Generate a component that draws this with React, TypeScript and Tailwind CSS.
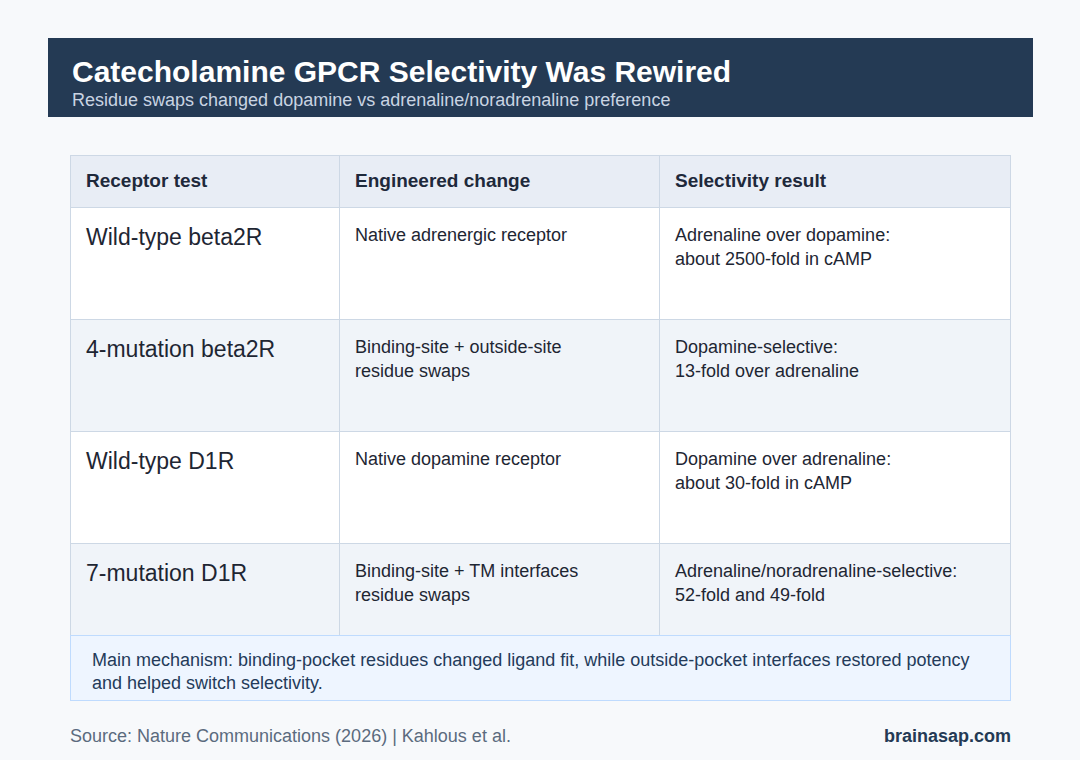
const rows = [
  {
    test: "Wild-type beta2R",
    change: ["Native adrenergic receptor"],
    result: ["Adrenaline over dopamine:", "about 2500-fold in cAMP"],
    shade: false,
    tall: true,
  },
  {
    test: "4-mutation beta2R",
    change: ["Binding-site + outside-site", "residue swaps"],
    result: ["Dopamine-selective:", "13-fold over adrenaline"],
    shade: true,
    tall: true,
  },
  {
    test: "Wild-type D1R",
    change: ["Native dopamine receptor"],
    result: ["Dopamine over adrenaline:", "about 30-fold in cAMP"],
    shade: false,
    tall: true,
  },
  {
    test: "7-mutation D1R",
    change: ["Binding-site + TM interfaces", "residue swaps"],
    result: ["Adrenaline/noradrenaline-selective:", "52-fold and 49-fold"],
    shade: true,
    tall: false,
  },
];

export default function App() {
  return (
    <div className="w-[1080px] h-[760px] bg-[#f7f9fb] pt-[38px] pl-[48px] font-['Liberation_Sans',Arial,sans-serif]">
      {/* Title banner */}
      <div className="w-[985px] h-[79px] bg-[#243a54] px-6 pt-[18px]">
        <h1 className="text-[30px] leading-[32px] font-bold text-white">
          Catecholamine GPCR Selectivity Was Rewired
        </h1>
        <p className="mt-[1px] text-[18px] leading-[22px] text-[#c9d4e2]">
          Residue swaps changed dopamine vs adrenaline/noradrenaline preference
        </p>
      </div>

      {/* Table */}
      <div className="w-[941px] mt-[38px] ml-[22px] border border-[#cdd8e5]">
        <div className="grid grid-cols-[269px_320px_350px] h-[52px] bg-[#e8edf5] border-b border-[#cdd8e5] text-[19px] font-bold text-[#1e293b]">
          <div className="px-[15px] flex items-center border-r border-[#cdd8e5]">Receptor test</div>
          <div className="px-[15px] flex items-center border-r border-[#cdd8e5]">Engineered change</div>
          <div className="px-[15px] flex items-center">Selectivity result</div>
        </div>

        {rows.map((r) => (
          <div
            key={r.test}
            className={`grid grid-cols-[269px_320px_350px] border-b border-[#cdd8e5] text-[#1e2633] ${
              r.shade ? "bg-[#f0f4f9]" : "bg-white"
            } ${r.tall ? "h-[112px]" : "h-[92px]"}`}
          >
            <div className="px-[15px] pt-[15px] border-r border-[#cdd8e5] text-[23px] leading-[28px]">
              {r.test}
            </div>
            <div className="px-[15px] pt-[15px] border-r border-[#cdd8e5] text-[18px] leading-[24px]">
              {r.change.map((l) => (
                <div key={l}>{l}</div>
              ))}
            </div>
            <div className="px-[15px] pt-[15px] text-[18px] leading-[24px]">
              {r.result.map((l) => (
                <div key={l}>{l}</div>
              ))}
            </div>
          </div>
        ))}

        <div className="h-[66px] bg-[#eef5ff] border border-[#bfdbfe] -m-px px-[21px] pt-[13px] text-[18px] leading-[23px] text-[#243b5a]">
          Main mechanism: binding-pocket residues changed ligand fit, while outside-pocket interfaces restored potency
          <br />
          and helped switch selectivity.
        </div>
      </div>

      {/* Footer */}
      <div className="w-[941px] ml-[22px] mt-[23px] flex items-center justify-between text-[18px] leading-[24px]">
        <span className="text-[#5b6b7e]">Source: Nature Communications (2026) | Kahlous et al.</span>
        <span className="font-bold text-[#243a54]">brainasap.com</span>
      </div>
    </div>
  );
}
